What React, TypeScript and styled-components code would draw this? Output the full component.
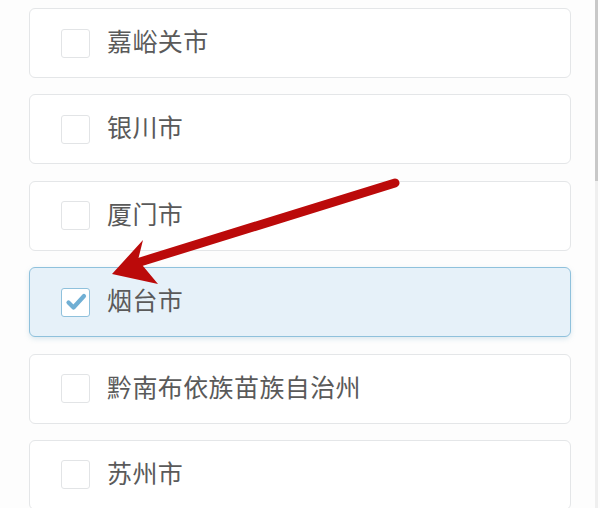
import styled, { createGlobalStyle } from "styled-components";

const GlobalStyle = createGlobalStyle`
  html, body {
    margin: 0;
    padding: 0;
    background: #fdfdfd;
    font-family: "Noto Sans CJK SC", "Noto Sans", sans-serif;
    overflow: hidden;
  }
`;

const Page = styled.div`
  position: relative;
  width: 600px;
  height: 508px;
  overflow: hidden;
  background: #fdfdfd;
`;

const List = styled.div`
  display: flex;
  flex-direction: column;
  gap: 16.4px;
  padding: 8px 29px 0 29px;
`;

const Card = styled.label<{ $checked?: boolean }>`
  display: flex;
  align-items: center;
  gap: 17px;
  box-sizing: border-box;
  height: 70px;
  padding: 0 0 0 31px;
  border-radius: 6px;
  border: 1.5px solid ${(p) => (p.$checked ? "#8fc1dc" : "#e4e6e8")};
  background: ${(p) => (p.$checked ? "#e6f1f9" : "#fff")};
  box-shadow: ${(p) => (p.$checked ? "0 2px 5px rgba(120, 170, 200, 0.25)" : "none")};
`;

const Box = styled.span<{ $checked?: boolean }>`
  display: flex;
  align-items: center;
  justify-content: center;
  box-sizing: border-box;
  width: 29px;
  height: 29px;
  border-radius: 3px;
  border: 1.5px solid ${(p) => (p.$checked ? "#8fc1dc" : "#e2e4e6")};
  background: #fff;
`;

const Name = styled.span`
  font-size: 25px;
  color: #5a5a5a;
  letter-spacing: 0.4px;
  line-height: 1;
  padding-bottom: 5px;
`;

const Scroll = styled.div`
  position: absolute;
  top: 0;
  right: 2px;
  width: 3px;
  height: 508px;
  background: #efefef;
`;

const Thumb = styled.div`
  width: 3px;
  height: 181px;
  background: #c8c8c8;
`;

const Arrow = styled.svg`
  position: absolute;
  left: 0;
  top: 0;
  pointer-events: none;
`;

const cities = [
  { name: "嘉峪关市" },
  { name: "银川市" },
  { name: "厦门市" },
  { name: "烟台市", checked: true },
  { name: "黔南布依族苗族自治州" },
  { name: "苏州市" },
];

const App = () => {
  return (
    <Page>
      <GlobalStyle />
      <List>
        {cities.map((c) => (
          <Card key={c.name} $checked={c.checked}>
            <Box $checked={c.checked}>
              {c.checked && (
                <svg width="22" height="22" viewBox="0 0 22 22">
                  <path
                    d="M3.5 11.5 L8.5 16.5 L19 5"
                    fill="none"
                    stroke="#70afd4"
                    strokeWidth="4.2"
                    strokeLinecap="round"
                    strokeLinejoin="round"
                  />
                </svg>
              )}
            </Box>
            <Name>{c.name}</Name>
          </Card>
        ))}
      </List>
      <Scroll>
        <Thumb />
      </Scroll>
      <Arrow width="600" height="508" viewBox="0 0 600 508">
        <line x1="395" y1="183" x2="140" y2="262" stroke="#bb0a0a" strokeWidth="9" strokeLinecap="round" />
        <path d="M112 274 L143 240 L138 260 L158 284 Z" fill="#bb0a0a" />
      </Arrow>
    </Page>
  );
};

export default App;
